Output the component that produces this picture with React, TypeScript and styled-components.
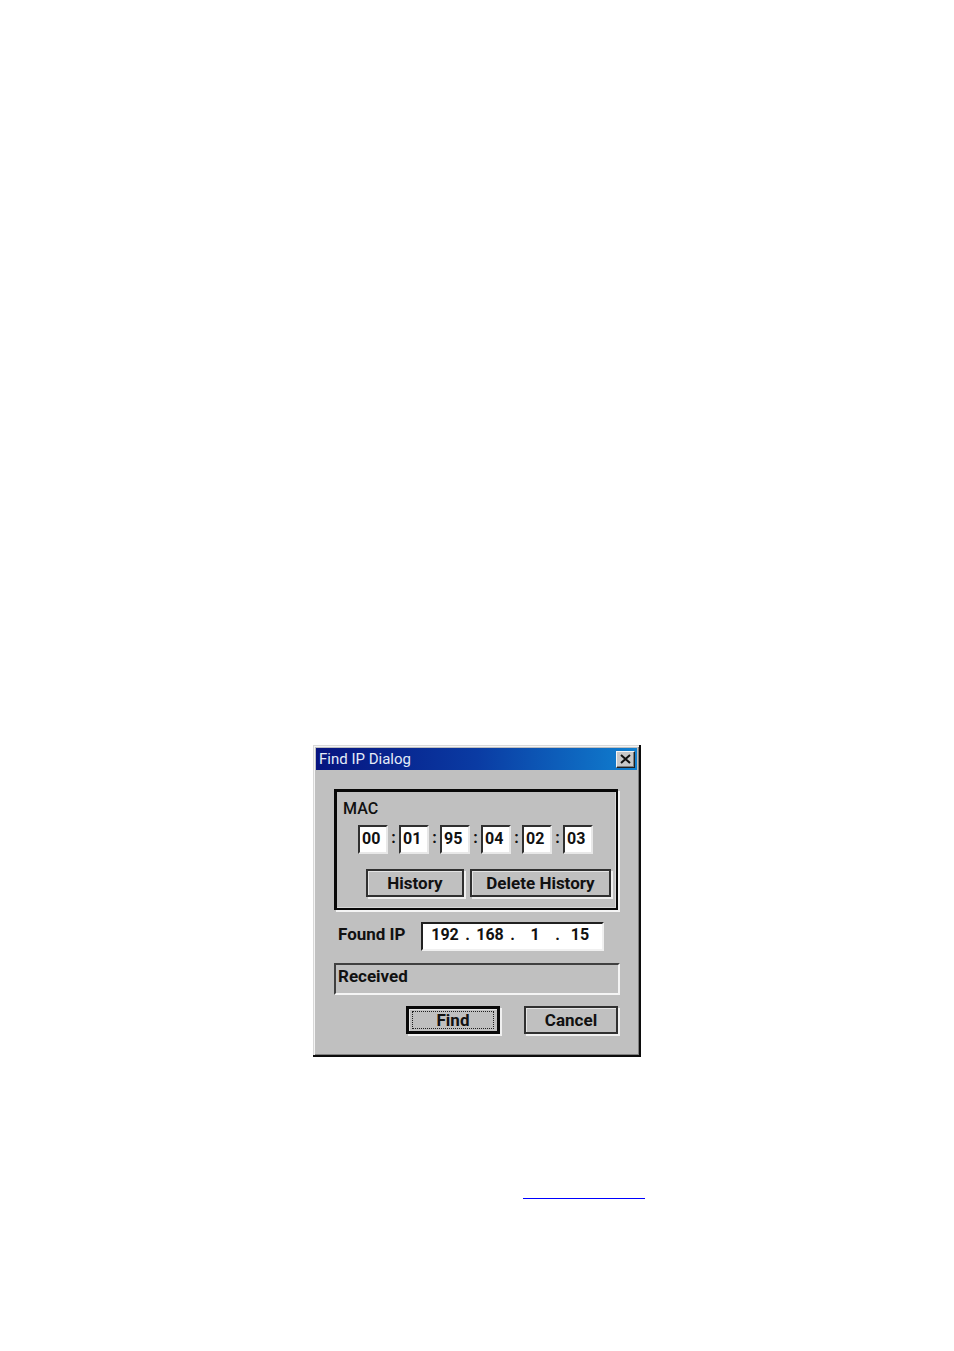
import { Fragment, useState } from "react";
import styled, { createGlobalStyle } from "styled-components";

const GlobalStyle = createGlobalStyle`
    *, *::before, *::after {
        box-sizing: border-box;
    }

    body {
        margin: 0;
        background-color: #ffffff;
        color: #111111;
        font-family: Roboto, "Liberation Sans", sans-serif;
        font-size: 16px;
        line-height: 20px;
    }

    button, input {
        color: inherit;
        font: inherit;
    }
`;

const Page = styled.main`
    display: flex;
    flex-direction: column;
    align-items: center;
    padding: 745px 16px 152px;
`;

const Dialog = styled.section`
    width: 100%;
    max-width: 328px;
    padding: 3px 2px 3px 3px;
    background-color: #c0c0c0;
    border: solid;
    border-width: 0 2px 2px 0;
    border-color: #0c0c0c;
    box-shadow: inset 1px 1px #d8d8d8, inset 2px 2px #f4f4f4,
        inset -1px -1px #808080;
`;

const TitleBar = styled.header`
    display: flex;
    align-items: center;
    justify-content: space-between;
    height: 22px;
    padding: 0 2px 0 3px;
    background: linear-gradient(to right, #06137f, #0a3ba3 50%, #1080d0);
`;

const Title = styled.h1`
    margin: 0;
    color: #e4ecf8;
    font-size: 15px;
    font-weight: 400;
`;

const CloseButton = styled.button`
    display: flex;
    align-items: center;
    justify-content: center;
    width: 19px;
    height: 17px;
    padding: 0;
    background-color: #c8c8c8;
    border: 1px solid;
    border-color: #f4f4f4 #202020 #202020 #f4f4f4;
    box-shadow: inset -1px -1px #808080;
`;

const Body = styled.form`
    padding: 19px 19px 18px 18px;
`;

const Group = styled.fieldset`
    min-width: 0;
    margin: 0;
    padding: 7px 5px 11px 6px;
    border: solid #080808;
    border-width: 3px 2px 2px 3px;
    box-shadow: 2px 2px #f4f4f4, inset -1px -1px #d8d8d8;
`;

const GroupLabel = styled.div`
    font-weight: 500;
`;

const MacRow = styled.div`
    display: flex;
    margin: 6px 0 15px 15px;
`;

const Colon = styled.span`
    width: 11px;
    padding-top: 3px;
    font-weight: 700;
    text-align: center;
`;

const MacInput = styled.input`
    width: 30px;
    height: 29px;
    padding: 0 0 2px 2px;
    background-color: #ffffff;
    border: 2px solid;
    border-color: #303030 #e8e8e8 #e8e8e8 #303030;
    border-radius: 0;
    font-weight: 700;
`;

const HistoryRow = styled.div`
    display: flex;
    justify-content: flex-end;
    gap: 6px;
`;

const Button = styled.button<{ $width: number; $default?: boolean }>`
    width: ${({ $width }) => $width}px;
    height: 28px;
    padding: 0;
    background-color: #c0c0c0;
    border: ${({ $default }) => ($default ? 3 : 2)}px solid
        ${({ $default }) => ($default ? "#080808" : "#303030")};
    border-radius: 0;
    box-shadow: 2px 2px #f0f0f0, inset 1px 1px #e4e4e4;
    font-size: 17px;
    font-weight: 700;
`;

const FocusRing = styled.span`
    display: block;
    height: 18px;
    margin: 0 3px;
    border: 1px dotted #202020;
    line-height: 16px;
`;

const FoundRow = styled.div`
    display: flex;
    align-items: center;
    justify-content: space-between;
    margin-top: 12px;
    padding: 0 14px 0 4px;
`;

const FoundLabel = styled.span`
    padding-bottom: 6px;
    font-size: 17px;
    font-weight: 700;
`;

const IpField = styled.div`
    display: flex;
    align-items: center;
    width: 183px;
    height: 29px;
    padding: 0 0 4px 4px;
    background-color: #ffffff;
    border: 2px solid;
    border-color: #202020 #f0f0f0 #f0f0f0 #202020;
    font-weight: 700;
`;

const Octet = styled.input`
    width: 36px;
    height: 21px;
    padding: 0;
    background-color: transparent;
    border: 0;
    text-align: center;
`;

const Dot = styled.span`
    width: 9px;
    text-align: center;
`;

const Status = styled.output`
    display: block;
    height: 32px;
    margin: 12px -2px 0 0;
    padding: 1px 2px;
    border: 2px solid;
    border-color: #404040 #f4f4f4 #f4f4f4 #404040;
    font-size: 17px;
    font-weight: 700;
`;

const Actions = styled.div`
    display: flex;
    justify-content: flex-end;
    gap: 24px;
    margin-top: 11px;
`;

const LinkRow = styled.div`
    display: flex;
    margin-top: 120px;
    padding-left: 214px;
`;

const FooterLink = styled.a`
    width: 122px;
    padding-top: 21px;
    color: #0000ff;

    &::after {
        content: "";
        display: block;
        height: 1px;
        background-color: #0000ff;
    }
`;

const octetNames = ["First", "Second", "Third", "Fourth"];

const replaceAt = (list: string[], index: number, value: string) =>
    list.map((item, idx) => (idx === index ? value : item));

const App = () => {
    const [mac, setMac] = useState(["00", "01", "95", "04", "02", "03"]);
    const [ip, setIp] = useState(["192", "168", "1", "15"]);

    return (
        <>
            <GlobalStyle />
            <Page>
                <Dialog role="dialog" aria-labelledby="dialog-title">
                    <TitleBar>
                        <Title id="dialog-title">Find IP Dialog</Title>
                        <CloseButton type="button" aria-label="Close">
                            <svg width="11" height="10" viewBox="0 0 11 10">
                                <path
                                    d="M1 1L10 9M10 1L1 9"
                                    stroke="#111111"
                                    strokeWidth="2"
                                />
                            </svg>
                        </CloseButton>
                    </TitleBar>
                    <Body onSubmit={(e) => e.preventDefault()}>
                        <Group aria-labelledby="mac-label">
                            <GroupLabel id="mac-label">MAC</GroupLabel>
                            <MacRow>
                                {mac.map((value, idx) => (
                                    <Fragment key={idx}>
                                        {idx > 0 && <Colon>:</Colon>}
                                        <MacInput
                                            aria-label={`MAC byte ${idx + 1}`}
                                            maxLength={2}
                                            value={value}
                                            onChange={(e) =>
                                                setMac(replaceAt(mac, idx, e.target.value))
                                            }
                                        />
                                    </Fragment>
                                ))}
                            </MacRow>
                            <HistoryRow>
                                <Button type="button" $width={98}>
                                    History
                                </Button>
                                <Button type="button" $width={141}>
                                    Delete History
                                </Button>
                            </HistoryRow>
                        </Group>
                        <FoundRow>
                            <FoundLabel id="found-label">Found IP</FoundLabel>
                            <IpField role="group" aria-labelledby="found-label">
                                {ip.map((value, idx) => (
                                    <Fragment key={idx}>
                                        {idx > 0 && <Dot>.</Dot>}
                                        <Octet
                                            aria-label={`${octetNames[idx]} octet`}
                                            maxLength={3}
                                            value={value}
                                            onChange={(e) =>
                                                setIp(replaceAt(ip, idx, e.target.value))
                                            }
                                        />
                                    </Fragment>
                                ))}
                            </IpField>
                        </FoundRow>
                        <Status>Received</Status>
                        <Actions>
                            <Button type="submit" $width={94} $default>
                                <FocusRing>Find</FocusRing>
                            </Button>
                            <Button type="button" $width={94}>
                                Cancel
                            </Button>
                        </Actions>
                    </Body>
                </Dialog>
                <LinkRow>
                    <FooterLink href="#" aria-label="Website" />
                </LinkRow>
            </Page>
        </>
    );
};

export default App;
